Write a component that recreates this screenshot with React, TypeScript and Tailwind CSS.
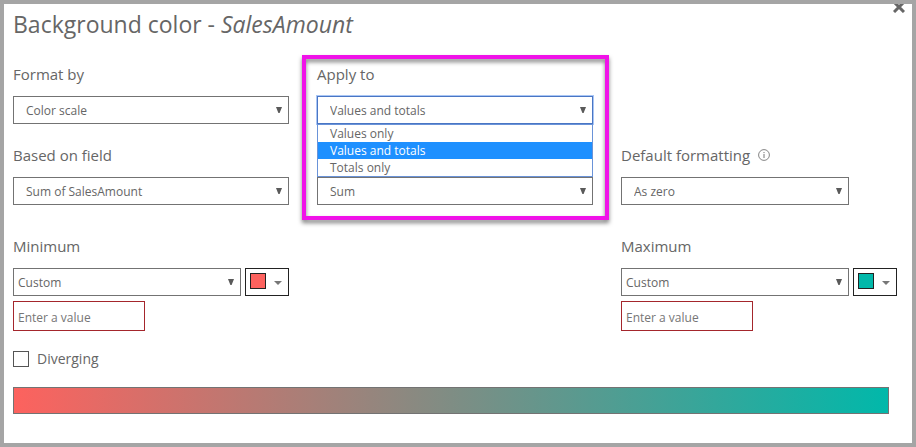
import type { ReactNode } from "react";

function Arrow() {
  return (
    <svg
      viewBox="0 0 6 6"
      className="pointer-events-none absolute top-[11px] right-[7px] h-[6px] w-[6px]"
      aria-hidden="true"
    >
      <path d="M0 0h6L3.6 6H2.4z" fill="#5a5a5a" />
    </svg>
  );
}

type SelectProps = {
  id: string;
  value: string;
  label?: string;
  options?: string[];
  tight?: boolean;
  active?: boolean;
};

function Select({ id, value, label, options, tight, active }: SelectProps) {
  return (
    <div className="relative min-w-0 flex-1">
      <select
        id={id}
        aria-label={label}
        defaultValue={value}
        className={`block h-7 w-full appearance-none border bg-white pt-[2px] pr-5 text-xs text-[#666] outline-none ${
          tight ? "pl-1" : "pl-3"
        } ${active ? "border-[#4a76c4] ring-1 ring-[#a9c6f5]" : "border-[#737373]"}`}
      >
        {(options ?? [value]).map((o) => (
          <option key={o}>{o}</option>
        ))}
      </select>
      <Arrow />
    </div>
  );
}

function Field({ id, label, children, extra }: { id: string; label: string; children: ReactNode; extra?: ReactNode }) {
  return (
    <div className="flex flex-col gap-[11px]">
      <div className="flex items-center gap-2">
        <label htmlFor={id} className="block text-[15px] leading-[22px]">
          {label}
        </label>
        {extra}
      </div>
      {children}
    </div>
  );
}

function InfoIcon() {
  return (
    <svg viewBox="0 0 12 12" className="h-3 w-3" fill="none" stroke="#777" role="img" aria-label="Info">
      <circle cx="6" cy="6" r="5.4" strokeWidth="0.9" />
      <path d="M6 5v4M6 3v1.1" strokeWidth="1" />
    </svg>
  );
}

function Bound({ id, label, swatch }: { id: string; label: string; swatch: string }) {
  return (
    <Field id={id} label={label}>
      <div className="flex flex-col gap-[5px]">
        <div className="flex gap-1">
          <Select id={id} value="Custom" tight />
          <button
            type="button"
            aria-label={`${label} color`}
            className="flex h-7 w-11 items-start gap-2 border border-[#222] pt-1 pl-1"
          >
            <span className={`h-4 w-4 border border-[#222] ${swatch}`} />
            <svg viewBox="0 0 8 4" className="mt-2 h-1 w-2" aria-hidden="true">
              <path d="M0 0h8L4 4z" fill="#777" />
            </svg>
          </button>
        </div>
        <input
          type="text"
          aria-label={`${label} value`}
          placeholder="Enter a value"
          className="h-[30px] w-[132px] border border-[#a4262c] px-1 pt-[2px] text-xs outline-none placeholder:text-[#767676]"
        />
      </div>
    </Field>
  );
}

const applyOptions = ["Values only", "Values and totals", "Totals only"];

export default function App() {
  return (
    <main className="relative min-h-screen overflow-hidden border-4 border-[#a5a5a5] bg-white pr-[15px] pb-[29px] pl-[9px] font-['Open_Sans','Noto_Sans',sans-serif] text-[#666]">
      <button type="button" aria-label="Close" className="absolute -top-[3px] right-[7px]">
        <svg viewBox="0 0 12 12" className="h-3 w-3" stroke="#666" strokeWidth="3">
          <path d="M1 1l10 10M11 1L1 11" />
        </svg>
      </button>

      <h1 className="pt-1 text-[23px] leading-8">
        Background color - <em>SalesAmount</em>
      </h1>

      <div className="mt-[23px] grid grid-cols-3 gap-x-7 gap-y-5">
        <Field id="format-by" label="Format by">
          <div className="flex">
            <Select id="format-by" value="Color scale" />
          </div>
        </Field>
        <div className="relative z-10">
          <Field id="apply-to" label="Apply to">
            <div className="relative flex">
              <Select id="apply-to" value="Values and totals" options={applyOptions} active />
              <ul
                role="listbox"
                aria-label="Apply to options"
                className="absolute top-full right-0 left-0 border border-[#6a93d8] bg-white text-xs"
              >
                {applyOptions.map((o) => (
                  <li
                    key={o}
                    role="option"
                    aria-selected={o === "Values and totals"}
                    className="h-[17px] pl-3 leading-[17px] aria-selected:bg-[#1e90ff] aria-selected:text-white"
                  >
                    {o}
                  </li>
                ))}
              </ul>
            </div>
          </Field>
          <div className="pointer-events-none absolute -top-2 -right-4 -left-[15px] h-[165px] border-4 border-[#f012e8] drop-shadow-[0_3px_2px_rgba(0,0,0,0.5)]" />
        </div>
        <div />

        <Field id="based-on" label="Based on field">
          <div className="flex">
            <Select id="based-on" value="Sum of SalesAmount" />
          </div>
        </Field>
        <div className="flex items-end">
          <Select id="summarization" label="Summarization" value="Sum" />
        </div>
        <Field id="default-formatting" label="Default formatting" extra={<InfoIcon />}>
          <div className="mr-12 flex">
            <Select id="default-formatting" value="As zero" />
          </div>
        </Field>
      </div>

      <div className="mt-[30px] grid grid-cols-3 gap-x-7">
        <Bound id="minimum" label="Minimum" swatch="bg-[#fd625e]" />
        <div />
        <Bound id="maximum" label="Maximum" swatch="bg-[#01b8aa]" />
      </div>

      <div className="mt-4 flex items-center gap-2">
        <input
          id="diverging"
          type="checkbox"
          className="h-4 w-4 appearance-none border border-[#555] bg-white checked:bg-[#666]"
        />
        <label htmlFor="diverging" className="text-sm leading-6">
          Diverging
        </label>
      </div>

      <div
        role="img"
        aria-label="Color scale preview"
        className="mt-4 mr-2 h-[27px] border border-[#737373] bg-linear-to-r/srgb from-[#fd625e] to-[#01b8aa]"
      />
    </main>
  );
}
